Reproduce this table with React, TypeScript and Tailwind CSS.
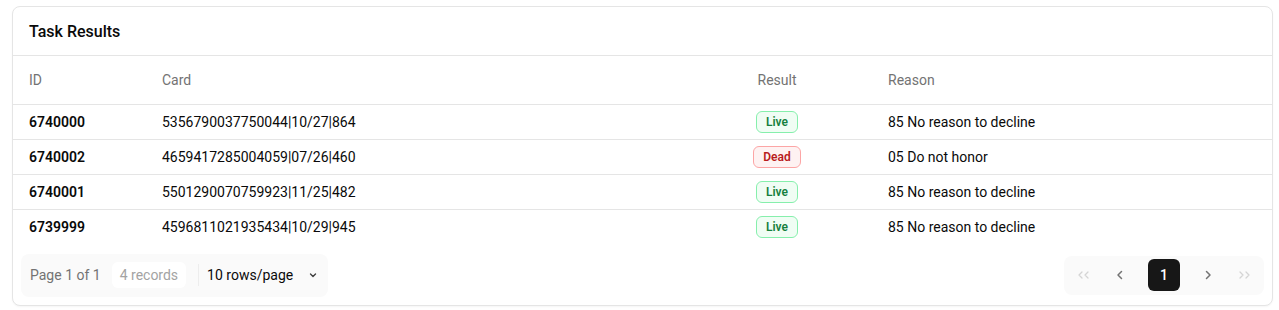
import React from "react";

const rows = [
  { id: "6740000", card: "5356790037750044|10/27|864", result: "Live", reason: "85 No reason to decline" },
  { id: "6740002", card: "4659417285004059|07/26|460", result: "Dead", reason: "05 Do not honor" },
  { id: "6740001", card: "5501290070759923|11/25|482", result: "Live", reason: "85 No reason to decline" },
  { id: "6739999", card: "4596811021935434|10/29|945", result: "Live", reason: "85 No reason to decline" },
];

function Badge({ r }: { r: string }) {
  if (r === "Live")
    return (
      <span className="inline-flex h-[22px] items-center rounded-md border border-[#86efac] bg-[#f0fdf4] px-[9px] text-xs font-semibold text-[#15803d]">
        Live
      </span>
    );
  return (
    <span className="inline-flex h-[22px] items-center rounded-md border border-[#fca5a5] bg-[#fef2f2] px-[9px] text-xs font-semibold text-[#b91c1c]">
      Dead
    </span>
  );
}

const Chev = ({ dir, double, color }: { dir: "l" | "r"; double?: boolean; color: string }) => (
  <svg width="16" height="14" viewBox="0 0 16 14" fill="none" stroke={color} strokeWidth="1.3" strokeLinecap="round" strokeLinejoin="round">
    {double ? (
      dir === "l" ? (
        <>
          <path d="M6 4 L3 7 L6 10" />
          <path d="M12 4 L9 7 L12 10" />
        </>
      ) : (
        <>
          <path d="M4 4 L7 7 L4 10" />
          <path d="M10 4 L13 7 L10 10" />
        </>
      )
    ) : dir === "l" ? (
      <path d="M9.5 3.5 L6 7 L9.5 10.5" strokeWidth="1.5" />
    ) : (
      <path d="M6.5 3.5 L10 7 L6.5 10.5" strokeWidth="1.5" />
    )}
  </svg>
);

export default function App() {
  const grid = "grid grid-cols-[133px_536px_190px_1fr] items-center";
  return (
    <div className="min-h-[310px] bg-white pl-3 pr-[6px] pt-[6px]" style={{ fontFamily: "Roboto, 'Noto Sans', sans-serif" }}>
      <div className="overflow-hidden rounded-lg border border-[#e5e5e5] bg-white text-[#0a0a0a] shadow-[0_1px_2px_rgba(0,0,0,0.04)]">
        <div className="border-b border-[#e5e5e5] px-4 pb-[13px] pt-[15px] text-base font-medium leading-5">Task Results</div>
        <div className={`${grid} h-[49px] border-b border-[#e5e5e5] pb-px text-sm text-[#737373]`}>
          <div className="pl-4">ID</div>
          <div className="pl-4">Card</div>
          <div className="text-center">Result</div>
          <div className="pl-4">Reason</div>
        </div>
        {rows.map((r, i) => (
          <div key={r.id} className={`${grid} h-[35px] pb-px text-sm ${i < rows.length - 1 ? "border-b border-[#e5e5e5]" : ""}`}>
            <div className="pl-4 font-semibold">{r.id}</div>
            <div className="pl-4">{r.card}</div>
            <div className="flex justify-center">
              <Badge r={r.result} />
            </div>
            <div className="pl-4">{r.reason}</div>
          </div>
        ))}
        <div className="flex h-[60px] items-center justify-between px-2">
          <div className="flex h-[43px] items-center rounded-lg bg-[#fafafa] pl-[9px] pr-[10px] text-sm">
            <span className="text-[#737373]">Page 1 of 1</span>
            <span className="ml-[11px] flex h-[26px] items-center rounded-md bg-white px-2 text-[#a3a3a3]">4 records</span>
            <span className="ml-3 h-[22px] w-px bg-[#ededed]" />
            <span className="ml-2 flex items-center">
              10 rows/page
              <svg className="ml-[15px]" width="10" height="10" viewBox="0 0 10 10" fill="none" stroke="#404040" strokeWidth="1.4" strokeLinecap="round" strokeLinejoin="round">
                <path d="M2.5 4 L5 6.5 L7.5 4" />
              </svg>
            </span>
          </div>
          <div className="flex h-[39px] items-center rounded-lg bg-[#fafafa] px-1">
            <button className="flex h-8 w-8 items-center justify-center">
              <Chev dir="l" double color="#d4d4d4" />
            </button>
            <button className="ml-1 flex h-8 w-8 items-center justify-center">
              <Chev dir="l" color="#737373" />
            </button>
            <button className="ml-3 flex h-8 w-8 items-center justify-center rounded-md bg-[#171717] text-sm font-medium text-white">1</button>
            <button className="ml-3 flex h-8 w-8 items-center justify-center">
              <Chev dir="r" color="#737373" />
            </button>
            <button className="ml-1 flex h-8 w-8 items-center justify-center">
              <Chev dir="r" double color="#d4d4d4" />
            </button>
          </div>
        </div>
      </div>
    </div>
  );
}
